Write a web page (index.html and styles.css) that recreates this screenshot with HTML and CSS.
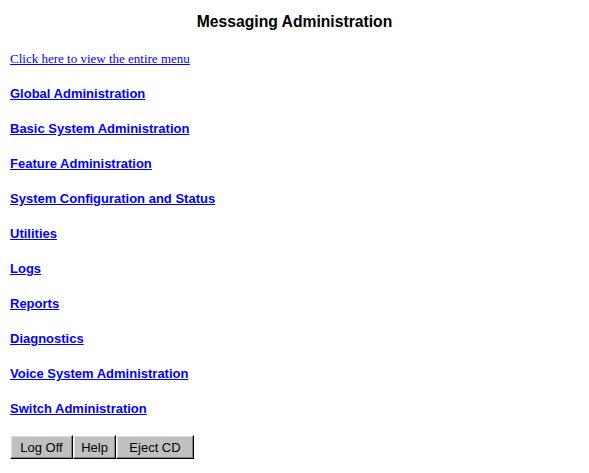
FILE: index.html
```html
<!DOCTYPE html>
<html lang="en">
<head>
    <meta charset="UTF-8">
    <title>Messaging Administration</title>
    <link rel="stylesheet" href="styles.css">
</head>
<body>
<h1 class="title">Messaging Administration</h1>
<p class="menu-all"><a href="#">Click here to view the entire menu</a></p>
<ul class="menu">
    <li><a href="#">Global Administration</a></li>
    <li><a href="#">Basic System Administration</a></li>
    <li><a href="#">Feature Administration</a></li>
    <li><a href="#">System Configuration and Status</a></li>
    <li><a href="#">Utilities</a></li>
    <li><a href="#">Logs</a></li>
    <li><a href="#">Reports</a></li>
    <li><a href="#">Diagnostics</a></li>
    <li><a href="#">Voice System Administration</a></li>
    <li><a href="#">Switch Administration</a></li>
</ul>
<div class="buttons">
    <button type="button" class="btn-logoff">Log Off</button>
    <button type="button" class="btn-help">Help</button>
    <button type="button" class="btn-eject">Eject CD</button>
</div>
</body>
</html>
```

FILE: styles.css
```css
/* reset */
body,h1,p,ul,li{margin:0;padding:0}
ul{list-style:none}
body{
    background:#fff;
    color:#000;
    padding:0 10px;
    font-family:"Liberation Serif", serif;
}
a{color:#0000ff;text-decoration:underline}

.title{
    margin-top:13px;
    text-align:center;
    font:bold 15.7px/18px "Liberation Sans", Arial, sans-serif;
}
.menu-all{
    margin-top:20px;
    font-size:13px;
    line-height:15px;
}
.menu li{
    margin-top:20px;
    font:bold 13px/15px "Liberation Sans", Arial, sans-serif;
}

.buttons{
    display:flex;
    margin-top:19px;
}
.buttons button{
    height:24px;
    padding:0;
    background:#c0c0c0;
    color:#000;
    font:13px "Liberation Sans", Arial, sans-serif;
    border:1px solid;
    border-color:#fff #000 #000 #fff;
    box-shadow:inset -1px -1px 0 #808080, inset 1px 1px 0 #dfdfdf;
    border-radius:0;
}
.btn-logoff{width:63px}
.btn-help{width:43px}
.btn-eject{width:78px}
```
